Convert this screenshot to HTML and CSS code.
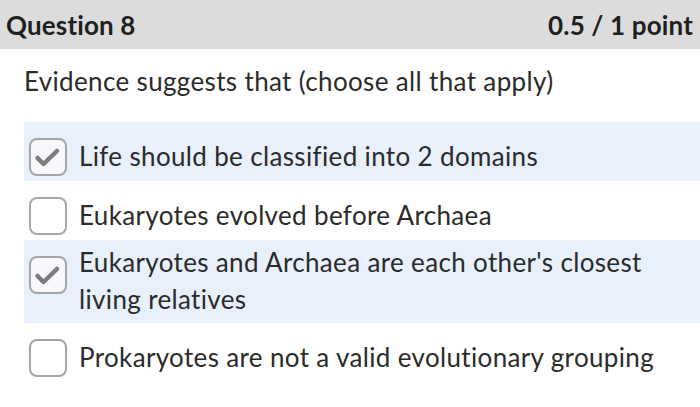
FILE: index.html
```html
<!DOCTYPE html>
<html lang="en">
<head>
<meta charset="utf-8">
<title>Question 8</title>
<link rel="stylesheet" href="styles.css">
</head>
<body>
<div class="header">
  <span class="title">Question 8</span>
  <span class="score">0.5 / 1 point</span>
</div>
<div class="content">
  <p class="question">Evidence suggests that (choose all that apply)</p>
  <ul class="options">
    <li class="option checked">
      <span class="box"><svg viewBox="0 0 38 38" width="38" height="38"><polyline points="8.5,20 14.5,26 28,13" fill="none" stroke="#7c7c7c" stroke-width="4.5" stroke-linecap="round" stroke-linejoin="round"/></svg></span>
      <span class="label">Life should be classified into 2 domains</span>
    </li>
    <li class="option">
      <span class="box"></span>
      <span class="label">Eukaryotes evolved before Archaea</span>
    </li>
    <li class="option checked multi">
      <span class="box"><svg viewBox="0 0 38 38" width="38" height="38"><polyline points="8.5,20 14.5,26 28,13" fill="none" stroke="#7c7c7c" stroke-width="4.5" stroke-linecap="round" stroke-linejoin="round"/></svg></span>
      <span class="label">Eukaryotes and Archaea are each other's closest living relatives</span>
    </li>
    <li class="option">
      <span class="box"></span>
      <span class="label">Prokaryotes are not a valid evolutionary grouping</span>
    </li>
  </ul>
</div>
</body>
</html>
```
FILE: styles.css
```css
html, body {
  margin: 0;
  padding: 0;
  background: #ffffff;
}
body {
  font-family: Lato, "Open Sans", sans-serif;
  color: #2b2b2b;
  width: 700px;
  overflow: hidden;
  font-variant-ligatures: none;
}
.header {
  height: 49px;
  background: #dcdcdc;
  display: flex;
  justify-content: space-between;
  align-items: center;
  padding: 1px 7px 0 6px;
  box-sizing: border-box;
  font-weight: 700;
  font-size: 26px;
  letter-spacing: 0.15px;
  color: #1f1f1f;
}
.content {
  padding-left: 24px;
}
.question {
  margin: 14px 0 23px 0;
  font-size: 26px;
  line-height: 36px;
  letter-spacing: 0.35px;
}
.options {
  list-style: none;
  margin: 0;
  padding: 0;
}
.option {
  display: flex;
  align-items: flex-start;
  padding: 16px 0 5px 5px;
  min-height: 38px;
}
.option.checked {
  background: #e7f0fb;
}
.box {
  flex: 0 0 auto;
  width: 38px;
  height: 38px;
  box-sizing: border-box;
  border: 2px solid #a6a6a6;
  border-radius: 8px;
  background: #ffffff;
  display: flex;
  align-items: center;
  justify-content: center;
  overflow: hidden;
}
.option.checked .box {
  background: #f6f8fb;
}
.box svg {
  display: block;
  margin: -2px;
}
.label {
  margin-left: 12px;
  font-size: 26px;
  line-height: 36px;
  letter-spacing: 0.35px;
}
.multi .label {
  line-height: 37px;
  margin-top: -12px;
}
```
